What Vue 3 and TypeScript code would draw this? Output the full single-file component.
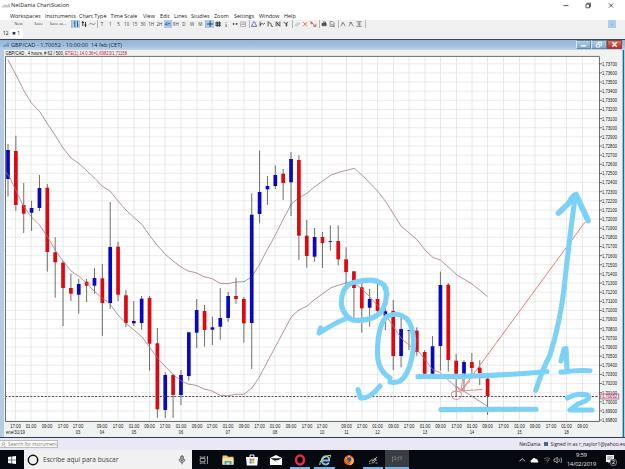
<script setup lang="ts">
interface Candle { x: number; high: number; top: number; bottom: number; low: number; up: boolean }

const menus: [string, number][] = [
  ['Workspaces', 35], ['Instruments', 34], ['Chart Type', 31.5], ['Time Scale', 32.5], ['View', 17],
  ['Edit', 14], ['Lines', 17], ['Studies', 23], ['Zoom', 20], ['Settings', 25], ['Window', 25], ['Help', 14],
]
const periods = ['T', '1', '5', '10', '15', '30', '1H', '2H', '4H', '8H', 'D', 'W', 'M']

const iconGroups: { start: string; icons: { d: string; color?: string; on?: boolean }[] }[] = [
  { start: 'g-cross', icons: [
    { d: 'M1 4H7M4 1V7', color: '#102c50', on: true },
    { d: 'M1 3H7M1 5.2H7M3 1.5V6.8M5.2 1.5V6.8', color: '#111' },
    { d: 'M4 2V2.8M3.4 4H4V6.4M3.3 6.4H4.8', color: '#777' },
    { d: 'M1.8 3.6H3.2M4.8 3.6H6.2M1.8 4.3H3.2M4.8 4.3H6.2', color: '#222' },
    { d: 'M1.5 2H6.5V6.5H1.5ZM1.5 4.5H6.5M3 3.2H6', color: '#aaa' },
  ] },
  { start: 'g-draw', icons: [
    { d: 'M1.3 6.4H6.7L5.2 3.5Q5 1.5 4 1.5Q3 1.5 2.8 3.5Z', color: '#5c5cc4' },
    { d: 'M2 1.5V6.5M2 4.7L4 3.5L5.4 4.2L6.8 3', color: '#333' },
    { d: 'M2 1.5V6.5M2 2L5 3.7V6L7 6.5', color: '#444' },
    { d: 'M2 1.5V6.5M5.8 1.5V6.5M2 2L5.8 6M3.9 2V6', color: '#444' },
    { d: 'M1.5 2.3L4 3.5L6 2.2M4 3.5V6.3M4.7 3.5V6.3', color: '#333' },
  ] },
  { start: 'g-edit', icons: [
    { d: 'M1.5 6L5.5 2.2M3 6.5L7 2.8', color: '#a9ada2' },
    { d: 'M2 2L6 6.3M6 2L2 6.3', color: '#ef6418' },
    { d: 'M1.5 1.5L6.5 6.5M2 1.5V4L4 3M4.3 6.3H6.8V3.8', color: '#a15e5e' },
  ] },
  { start: 'g-print', icons: [
    { d: 'M2 3.5H6V5.7H2ZM2.7 2H5.3V3.5M2.2 4.5H5.8', color: '#333' },
    { d: 'M2 1.5H4.5L6 3V6.5H2ZM3 3.8L6.6 6.5M3 5H4.5', color: '#888' },
  ] },
  { start: 'g-text', icons: [
    { d: 'M1.8 6.3L4 2.4L6.2 6.3M2.5 3H4', color: '#777' },
    { d: 'M1.8 6.3L4 2.4L6.2 6.3M2 2.5H4.5', color: '#777' },
    { d: 'M1.3 1.8H6.7M1.3 6.3H6.7M4 1.8V6.3M2.5 4H5.5', color: '#777' },
  ] },
]

// high, body top, body bottom, low, direction (1 rising, 0 falling)
const bars: number[][] = [
  [144, 150, 179, 196.7, 1], [135.7, 151, 205, 210.7, 0], [183, 205, 213.7, 233, 0], [200.7, 208, 212.7, 231, 1],
  [175, 188, 208, 211, 1], [184, 187.7, 252, 271.7, 0], [237.3, 252.3, 262.3, 297.7, 0], [261, 262.7, 288, 326, 0],
  [273.7, 288, 293.7, 301, 0], [279, 284, 294.7, 313.7, 1], [278.7, 281.7, 285.7, 302, 0], [268, 278, 285.7, 293.7, 1],
  [264, 278.3, 303, 336, 0], [202, 247, 303, 309, 1], [241.7, 246.7, 294.7, 301, 0], [290, 295.3, 323, 327, 0],
  [301, 321, 323.3, 326, 1], [296, 298.7, 323, 329.7, 1], [296, 298, 343.7, 370.7, 0], [328, 343.3, 409.3, 418, 0],
  [372.3, 375, 410, 418, 1], [374, 375, 395, 418, 0], [370, 375, 395, 405, 1], [332.3, 332.3, 376, 380.7, 1],
  [299, 310, 332.7, 348, 1], [305, 311, 330, 346.7, 0], [316.7, 327.3, 329.7, 345, 1], [288, 318, 326.7, 339.7, 1],
  [292, 296, 318, 322, 1], [277.7, 296, 299, 303.7, 0], [297, 299, 323.3, 342.7, 0], [193.3, 214.7, 323, 369, 1],
  [150.7, 192, 214, 223.3, 1], [176, 186, 189.3, 205, 1], [165.3, 175, 186, 189, 1], [169, 173.7, 183, 200, 0],
  [152, 159, 182.3, 216, 1], [155.3, 160, 235.7, 260, 0], [220, 235.7, 256, 267.7, 0], [228, 237, 256.7, 261.7, 1],
  [232, 237, 243, 268, 0], [225.3, 241, 241.8, 250.7, 1], [225.3, 241, 259.3, 265.3, 0], [247.3, 259.3, 272, 286.7, 0],
  [271.3, 271.3, 288, 318, 0], [283, 287.3, 308.3, 332.7, 0], [289, 299, 307.7, 326.7, 1], [284, 299, 311, 316, 0],
  [308, 311.3, 315.7, 330, 1], [300, 311, 356, 370, 0], [316.7, 329, 356, 367.3, 1], [330, 330, 330.7, 350, 1],
  [327.3, 330.7, 352, 355.7, 0], [350, 352, 373.7, 375, 0], [336, 346.3, 373.7, 375, 1], [271.7, 285, 346, 370.7, 1],
  [283, 284.7, 360, 371.7, 0], [354, 360.7, 373.7, 396.7, 0], [360, 362, 373.7, 391, 1], [353, 362, 368, 374.7, 0],
  [360.3, 367.7, 373, 385, 0], [376.7, 378.7, 396, 415, 0],
]
const candles: Candle[] = bars.map(([high, top, bottom, low, dir], i) => ({
  x: 8 + i * 7.862, high, top, bottom, low, up: dir === 1,
}))

const prices = Array.from({ length: 40 }, (_, i) => ({
  y: 63.8 + i * 9.135,
  label: '1,' + String(73700 - i * 100),
}))

const ticks: [number, string, string?][] = [
  [15.5, '17:00', 'ene/31/19'], [31, '01:00'], [47, '09:00'], [63, '17:00'], [78, '17:00', '03'], [102, '09:00', '04'],
  [118, '17:00'], [134, '01:00', '05'], [149.5, '09:00'], [165, '17:00'], [181, '01:00', '06'], [197, '09:00'],
  [212, '17:00'], [228, '01:00', '07'], [244, '09:00'], [259.5, '17:00'], [275, '01:00', '08'], [291, '09:00'],
  [307, '17:00'], [322, '17:00', '10'], [346.5, '09:00', '11'], [362, '17:00'], [377.5, '01:00', '12'], [393.5, '09:00'],
  [409, '17:00'], [425, '01:00', '13'], [440.5, '09:00'], [456.5, '17:00'], [472, '01:00', '14'], [487.5, '09:00'],
  [503.5, '17:00'], [519.5, '01:00', '15'], [535, '09:00'], [551, '17:00'], [566.5, '01:00', '18'], [582.5, '09:00'],
]

const upper = '8,60 16,75 24,91 31.5,103 40,112 47.5,124 55,135 63,148 71,158 79,163.5 87,171 95,178.5 102,186 110,191 118,201 126,210 134,217.5 142,224.5 149.5,235.5 157,245 165,254 173,261 181,267 188,271 196,272.7 204,276.7 212,278.7 220,283.3 228,283.7 236,282 244,281.7 251.5,277 259,265.5 267,250 275,235.7 283,219.5 291.5,204 299,197.5 307,193.3 314,187.3 331,175 340,172 354.5,168.3 363,176 377.5,191 386,202 401,226 417,239.7 425,250 433,257.5 440.5,260 457,275 472,284 487.5,296.5'
const lower = '6,172 10,178 20,199 24,207 31.5,217 39.5,225 47,236 55,249.7 63,261 71,271 78.5,276 86.5,283 94,291 102,298 107,301.5 111,305.5 118,315 126,323.5 134,330 142,337 149.5,347 157,357.5 163,364 173,374.5 181,380.7 188,384 196,385.3 204,389 212,391 220,395.3 228,395.7 236,394.3 244,394.3 252,388 259,377.5 275,347.5 291.5,316.5 299,310 307,306 314,300 331,287.7 340,284.7 352,281.5 362,289 370,297 385,314 401,338 410,346 420,353 433,370 440,372.5 455,386 470,395 487,406'
</script>

<template>
  <div class="screen">
    <header class="titlebar">
      <svg class="logo" width="8" height="5" viewBox="0 0 8 5"><path d="M1 4.5V2.5M3 4.5V1.5M5 4.5V2M7 4.5V.8" stroke="#8b98a8" /></svg>
      <span class="apptitle">NetDania ChartStation</span>
      <svg class="winctl" width="60" height="11" viewBox="0 0 60 11" fill="none" stroke="#333" stroke-width=".8">
        <path d="M9.5 5.6H14.5M32 4.2H35.5V7.8H32ZM33 4V3.2H36.5V6.7H35.7M55 3.4L59.2 7.6M59.2 3.4L55 7.6" />
      </svg>
    </header>
    <nav class="menubar">
      <span v-for="m in menus" :key="m[0]" :style="{ width: m[1] + 'px' }">{{ m[0] }}</span>
    </nav>
    <div class="toolbar">
      <div class="files"><span>New</span><span>Save</span><span>Save as...</span></div>
      <div class="group g-type">
        <svg class="on" viewBox="0 0 8 8"><path d="M2.7 1V7M5.4 1V7M1.6 3H2.7M5.4 5H6.4" stroke="#2b5688" /></svg>
        <svg viewBox="0 0 8 8"><path d="M2.7 1V6M5.4 2V7M1.7 2.5H3.7M4.4 5H6.4" stroke="#111" /></svg>
        <svg viewBox="0 0 8 8"><path d="M.6 4.8Q2.4 2.2 4 4T7.5 3" stroke="#777" /></svg>
      </div>
      <div class="group g-period">
        <span v-for="p in periods" :key="p" :class="{ on: p === '4H' }">{{ p }}</span>
      </div>
      <div v-for="g in iconGroups" :key="g.start" class="group" :class="g.start">
        <svg v-for="(ic, i) in g.icons" :key="i" viewBox="0 0 8 8" :class="{ on: ic.on }"><path :d="ic.d" :stroke="ic.color" /></svg>
      </div>
      <i class="overflow">»</i>
    </div>
    <div class="tabs"><span>12</span><span class="active">✖ 1</span></div>

    <section class="mdi">
      <div class="mdibar">
        <svg width="7" height="6" viewBox="0 0 7 6"><path d="M1 5V3M3 5V2M5 5V1" stroke="#557aa5" /></svg>
        <span>GBP/CAD - 1,70052 - 10:00:00&nbsp; 14 feb (CET)</span>
        <div class="btns">
          <b><svg viewBox="0 0 14 8"><path d="M4 5.5H10" stroke="#fff" stroke-width="1.6" /></svg></b>
          <b><svg viewBox="0 0 14 8"><path d="M4.5 3.5H8.5V6.8H4.5ZM6.5 3V1.4H10.3V5H9" stroke="#fff" fill="none" /></svg></b>
          <b class="close"><svg viewBox="0 0 14 8"><path d="M4.5 1.5L9.5 6.5M9.5 1.5L4.5 6.5" stroke="#fff" stroke-width="1.7" /></svg></b>
        </div>
      </div>
      <div class="mdibody">
        <svg class="chart" width="618" height="387" viewBox="4 50 618 387">
          <rect x="5" y="56" width="594.5" height="365.5" fill="#fff" />
          <g stroke="#e9e6e6" stroke-width=".8">
            <path v-for="p in prices" :key="p.y" :d="`M5 ${p.y}H599`" />
            <path v-for="t in ticks" :key="t[0]" :d="`M${t[0]} 56V421`" stroke="#e0e3e2" />
          </g>
          <text class="head" x="5.5" y="55" textLength="121.5" lengthAdjust="spacingAndGlyphs">GBP/CAD , 4 hours, # 62 / 500, <tspan class="red">ETE(1) 14,0.36=1,69823/1,71158</tspan></text>
          <polyline :points="upper" class="band" />
          <g v-for="c in candles" :key="c.x">
            <path :d="`M${c.x} ${c.high}V${c.low}`" stroke="#555" stroke-width=".85" />
            <rect :x="c.x - 1.85" :y="c.top" width="3.7" :height="c.bottom - c.top" :fill="c.up ? '#0808c4' : '#df0710'" />
          </g>
          <polyline :points="lower" class="band" />
          <path d="M5 396.5H599" stroke="#443c48" stroke-width=".9" stroke-dasharray="2.2 1.4" />
          <path d="M5.5 421.5V56.4H599.5V421.5Z" fill="none" stroke="#6e6e6e" />
          <g class="axis">
            <g v-for="p in prices" :key="p.label">
              <path :d="`M599.5 ${p.y}H602`" stroke="#555" stroke-width=".8" />
              <text x="602" :y="p.y + 1.9" textLength="15" lengthAdjust="spacingAndGlyphs">{{ p.label }}</text>
            </g>
            <rect x="600.8" y="394" width="18" height="5" fill="#f4dfe8" stroke="#9c5a78" stroke-width=".7" />
            <text x="602" y="398.4" textLength="15" lengthAdjust="spacingAndGlyphs" class="now">1,70052</text>
            <g v-for="t in ticks" :key="t[0]" text-anchor="middle">
              <text :x="t[0]" y="428" textLength="10.7" lengthAdjust="spacingAndGlyphs">{{ t[1] }}</text>
              <text v-if="t[2]" :x="t[0]" y="434" :textLength="t[2].length > 2 ? 19 : 4.4" lengthAdjust="spacingAndGlyphs">{{ t[2] }}</text>
            </g>
          </g>
          <g class="red-ink">
            <path d="M461 391L585 222" stroke-width="1" />
            <path d="M463.5 373L461 391L482.5 389.4M460 391L457 386M461 391L470 381" />
            <path d="M452 392Q456 390 461 392L461.5 397Q458 401 453 398.5Q450 395 452 392Z" />
          </g>
          <g class="ink">
            <path d="M386 288Q388 304 380 313Q370 322 352 320Q340 312 341.5 300Q343 284 356 282Q374 277 384 285L387 294" />
            <path d="M346 318.5Q335 323 319 333L320.5 328" />
            <path d="M390 378Q377 370 377.5 351Q378 324 387 316.5Q397 311 407 319Q417 332 412 357Q408 376 400 381Q396 383 390 382" />
            <path d="M358 389.5L360.5 398Q370 399 380 386" />
            <path d="M418 376.5H460Q505 375.5 547 371.5M441 409.6L536 409.3" />
            <path d="M535.7 390.5Q543 368 550 355Q560 323 564 289Q568 250 575 198" />
            <path d="M558.5 213L569 203Q573 195 576 194.5L588 220.5" stroke-width="5.8" />
            <path d="M561 361L564 349L566 348.5L567 370M561 372H563Q576 370 590 370.7" />
            <path d="M567.5 398Q579 392 588 395.5Q592 399 578 404L570 410H592" />
          </g>
        </svg>
      </div>
    </section>

    <div class="status">
      <div class="search"><svg width="6" height="7" viewBox="0 0 6 7" fill="none" stroke="#777" stroke-width=".7"><circle cx="3" cy="2.5" r="1.5" /><path d="M2 3.7L.8 5.5M3.5 5.5H5.5" /></svg><span>Search for instrument</span></div>
      <div class="signed"><span>NetDania</span><i></i><span>Signed in as r_naylor1@yahoo.es</span></div>
    </div>

    <footer class="taskbar">
      <div class="start"><svg width="8" height="8" viewBox="0 0 8 8" fill="#fff"><path d="M0 1.1L3.5.6V3.7H0ZM4.1.5L8 0V3.7H4.1ZM0 4.3H3.5V7.4L0 6.9ZM4.1 4.3H8V8L4.1 7.5Z" /></svg></div>
      <div class="cortana">
        <svg width="12" height="12" viewBox="0 0 12 12"><circle cx="6" cy="6" r="4.7" fill="none" stroke="#111" stroke-width="1.5" /></svg>
        <span>Escribe aquí para buscar</span>
        <svg class="mic" width="8" height="10" viewBox="0 0 8 10" fill="none" stroke="#444" stroke-width=".8"><rect x="2.7" y=".8" width="2.6" height="5" rx="1.2" fill="#aaa" /><path d="M1.3 4V5.3Q1.5 7.3 4 7.3T6.7 5.3V4M4 7.3V9.4" /></svg>
      </div>
      <div class="apps">
        <div class="app"><svg viewBox="0 0 14 12" fill="none" stroke="#bbb" stroke-width=".8"><path d="M3.2 2.2V3.2H8V2.2M3.2 4.5H8V7.7H3.2ZM3.2 10.2V9H8V10.2M10.4 2V10" /><path d="M10 4H11" stroke-width="1.4" /></svg></div>
        <div class="app"><svg viewBox="0 0 14 12"><path d="M1.5 1.5H6L7 2.7H12.5V10.5H1.5Z" fill="#e9cc72" /><path d="M1.5 4.3H12.5V10.7H1.5Z" fill="#f8e49b" /><path d="M3.5 10.8V7H10.5V10.8H8.5V8.6H5.5V10.8Z" fill="#3ba8dc" /></svg></div>
        <div class="app"><svg viewBox="0 0 14 12"><path d="M5 3.2V1H9V3.2" fill="none" stroke="#fff" /><path d="M1 3H13L12.3 11.5H1.8Z" fill="#fff" /><path d="M4.5 4.6H6.7V6.8H4.5Z" fill="#e2573b" /><path d="M7.2 4.6H9.4V6.8H7.2Z" fill="#74ae30" /><path d="M4.5 7.3H6.7V9.5H4.5Z" fill="#2697cf" /><path d="M7.2 7.3H9.4V9.5H7.2Z" fill="#f0b51c" /></svg></div>
        <div class="app"><svg viewBox="0 0 14 12"><path d="M1 4L7 1L13 4V11H1Z" fill="#fff" /><path d="M1.5 4.2H12.5L7 7.5Z" fill="#151b20" /><path d="M6 6.2L8.3 8L8.7 6Z" fill="#fff" /></svg></div>
        <div class="app open"><svg viewBox="0 0 14 12"><ellipse cx="7" cy="6" rx="4" ry="4.4" fill="none" stroke="#e62f3f" stroke-width="2.5" /></svg></div>
        <div class="app open"><svg viewBox="0 0 14 12"><path d="M11 8.5Q8.5 12 5 9.5Q2.7 6.5 5 3.6Q8.6.8 11 4.3V6.5H5" fill="none" stroke="#6ac7f3" stroke-width="2" /><path d="M1.8 11Q1 8 5 4.5T12.5 1.2Q13 2 12 3.5" fill="none" stroke="#f6d04d" stroke-width="1" /></svg></div>
        <div class="app"><svg viewBox="0 0 14 12"><circle cx="7" cy="6.3" r="5" fill="#e95622" /><path d="M3 2.8L5 4L7 1L8.4 3Q12 4 12 7Q11 11.3 7 11.3Q10 8 7 7Q4 7 3 2.8Z" fill="#ffb52b" /><circle cx="7" cy="5.6" r="2.4" fill="#3c4aa1" /><path d="M2.2 5Q4.5 4.5 6.5 6.3Q5 8.4 8.8 8.7Q5 11 2.8 7.5Z" fill="#f26a20" /></svg></div>
        <div class="app open"><svg viewBox="0 0 14 12" fill="none" stroke="#d5d5c1" stroke-width=".8"><path d="M3 8L5.5 6L7 7L11 3M3 9.7H4.5M5.5 9L7 7.7M7 9.5L10 5.5M9.5 9H11.5M8.5 4L10.5 6.5" /><path d="M5.8 5.3H8" stroke="#8c993c" /></svg></div>
        <div class="app open current"><svg viewBox="0 0 14 12" fill="none" stroke="#858585" stroke-width=".7"><path d="M2.5 2.5V8M3 3H6V5.5H4M8.2 2.5V7M8.8 3H12L10.5 6" /></svg></div>
      </div>
      <div class="tray">
        <svg width="49" height="12" viewBox="0 0 49 12" fill="none" stroke="#ddd" stroke-width=".9">
          <path d="M3.5 7.3L6.2 4.6L9 7.3" /><path d="M15 8.5Q13.8 6.2 16.2 5.5Q17.5 2.8 20 5Q22 5 21.8 7Q23.2 8 22 8.6Z" fill="#fff" stroke="none" />
          <path d="M28 4.8Q31 2.8 34 4.5M29.3 6.5Q31.5 5 33 6.5M31 8.5L33.5 4.3" stroke="#666" /><path d="M38 5H39.5L41.2 3.3V9L39.5 7.4H38ZM42.8 4.5Q44 6.2 42.8 8M44.8 3.5Q46.7 6.2 44.8 9" stroke-width=".7" />
        </svg>
        <div class="clock"><span>9:59</span><span>14/02/2019</span></div>
        <svg class="note" width="13" height="14" viewBox="0 0 13 14"><path d="M1 2H9V9H5L3.5 10.5V9H1Z" fill="#fff" /><path d="M2.2 4H7.8M2.2 6H7" stroke="#333" stroke-width=".7" /><circle cx="8.4" cy="9.4" r="3.3" fill="#111820" stroke="#9aa0a5" stroke-width=".7" /><text x="8.4" y="11.4" text-anchor="middle">2</text></svg>
      </div>
    </footer>
  </div>
</template>

<style>
body { margin: 0; overflow: hidden; background: #fff; }
</style>
<style scoped>
.screen { width: 625px; height: 469px; display: flex; flex-direction: column; overflow: hidden; font-family: "Open Sans", "Noto Sans", sans-serif; color: #222; background: #f0f0f0; }
.screen > * { flex-shrink: 0; }
.titlebar { height: 11px; background: #fff; display: flex; align-items: center; padding-left: 2px; box-sizing: border-box; }
.logo { margin-right: 1px; }
.apptitle { font-size: 5.55px; line-height: 11px; white-space: nowrap; }
.winctl { margin-left: auto; margin-right: 11px; }
.menubar { height: 9px; background: #fff; display: flex; padding-left: 10px; font-size: 5.45px; line-height: 10px; white-space: nowrap; }
.toolbar { height: 8px; display: flex; align-items: stretch; background: #f0f0f0; font-size: 4.5px; line-height: 8px; color: #444; }
.files { width: 71px; display: grid; grid-template-columns: 23px 17px 22px; padding-left: 7px; box-sizing: border-box; text-align: center; white-space: nowrap; font-size: 3.9px; }
.group { display: flex; box-sizing: border-box; border-left: 1px solid #b5b5b5; }
.group > * { width: 8.2px; height: 8px; text-align: center; flex: none; }
.group svg { fill: none; stroke-width: .85; }
.group .on { background: #aacdee; color: #174478; }
.g-type { width: 26px; }
.g-period { width: 108px; }
.g-cross { width: 43.5px; }
.g-draw { width: 43.5px; }
.g-edit { width: 27px; }
.g-print { width: 19px; }
.g-text { width: 28px; border-right: 1px solid #b5b5b5; }
.overflow { margin-left: auto; margin-right: 9px; width: 8px; height: 8px; background: #a8cef0; color: #7aa1c5; text-align: center; font-style: normal; }
.tabs { height: 11px; display: flex; font-size: 4.7px; line-height: 11px; color: #111; font-family: "Noto Sans", "DejaVu Sans", sans-serif; }
.tabs span { padding-left: 3px; width: 7px; }
.tabs .active { background: #fff; width: 11px; padding-left: 2px; height: 9px; margin-top: 1px; line-height: 8px; white-space: nowrap; }
.mdi { height: 399px; box-sizing: border-box; border-top: 1px solid #314857; border-bottom: 1.4px solid #28434e; background: #b7cce1; }
.mdibar { height: 10px; display: flex; align-items: center; padding-left: 3px; background: linear-gradient(#98b4d4, #a3c0e1 60%, #bdd3e8); font-size: 5.65px; line-height: 10px; color: #192a3e; }
.mdibar > span { white-space: nowrap; margin-left: 1px; }
.btns { margin-left: auto; margin-right: 3px; display: flex; height: 9px; align-self: flex-start; }
.btns b { box-sizing: border-box; width: 15.5px; height: 9px; border: 1px solid #6687aa; border-left-color: #dce9f3; background: linear-gradient(#b2cbe2, #84a9ca); display: block; }
.btns svg { display: block; width: 13px; height: 7px; }
.btns .close { background: linear-gradient(#da776c, #bd291d); border-color: #93423c; }
.mdibody { margin: 0 0 0 4px; height: 387px; width: 618px; background: #f0f1f1; box-shadow: 1px 0 #72d5ef, 2px 0 #3b6173; }
.chart { display: block; font-family: "Liberation Sans", Arial, sans-serif; }
.head { font-size: 4.6px; fill: #111; }
.head .red { fill: #c32348; }
.axis text { font-size: 4.7px; fill: #222; }
.axis .now { fill: #a02c62; }
.band { fill: none; stroke: #a07a80; stroke-width: .8; }
.ink { fill: none; stroke: #7bd1f8; stroke-width: 5.1; stroke-linecap: round; stroke-linejoin: round; }
.red-ink { fill: none; stroke: #e27d7d; stroke-width: .9; }
.status { height: 12px; background: #ebe8f5; display: flex; justify-content: space-between; align-items: center; }
.search { width: 58px; height: 8px; box-sizing: border-box; border: 1px solid #bbb; border-left: 0; background: #fff; display: flex; align-items: center; gap: 2px; font-size: 4.8px; line-height: 7px; color: #777; white-space: nowrap; overflow: hidden; padding-left: 1px; }
.signed { display: flex; align-items: center; gap: 3px; font-size: 4.9px; line-height: 8px; white-space: nowrap; }
.signed i { width: 4px; height: 4px; background: #426894; }
.taskbar { height: 19px; background: #040a10; display: flex; }
.start { width: 23.5px; display: flex; align-items: center; justify-content: center; }
.cortana { width: 168px; background: #f1f1f1; display: flex; align-items: center; padding: 0 6px 0 3.5px; box-sizing: border-box; font-size: 6.6px; line-height: 19px; color: #444; }
.cortana span { margin-left: 4px; white-space: nowrap; }
.mic { margin-left: auto; }
.apps { display: flex; }
.app { width: 24.2px; box-sizing: border-box; padding: 0 2px; }
.app svg { display: block; width: 14px; height: 12px; margin: 4px auto 1px; }
.app.open::after { content: ""; display: block; height: 2px; background: #72b7ea; }
.app.current { padding: 0; background: #3a3d42; }
.tray { margin-left: auto; display: flex; align-items: center; color: #eee; }
.clock { width: 33px; font-size: 5.5px; line-height: 8.5px; text-align: center; display: flex; flex-direction: column; }
.note { margin: 0 7px 0 7px; }
.note text { font-size: 5.5px; fill: #fff; }
</style>
